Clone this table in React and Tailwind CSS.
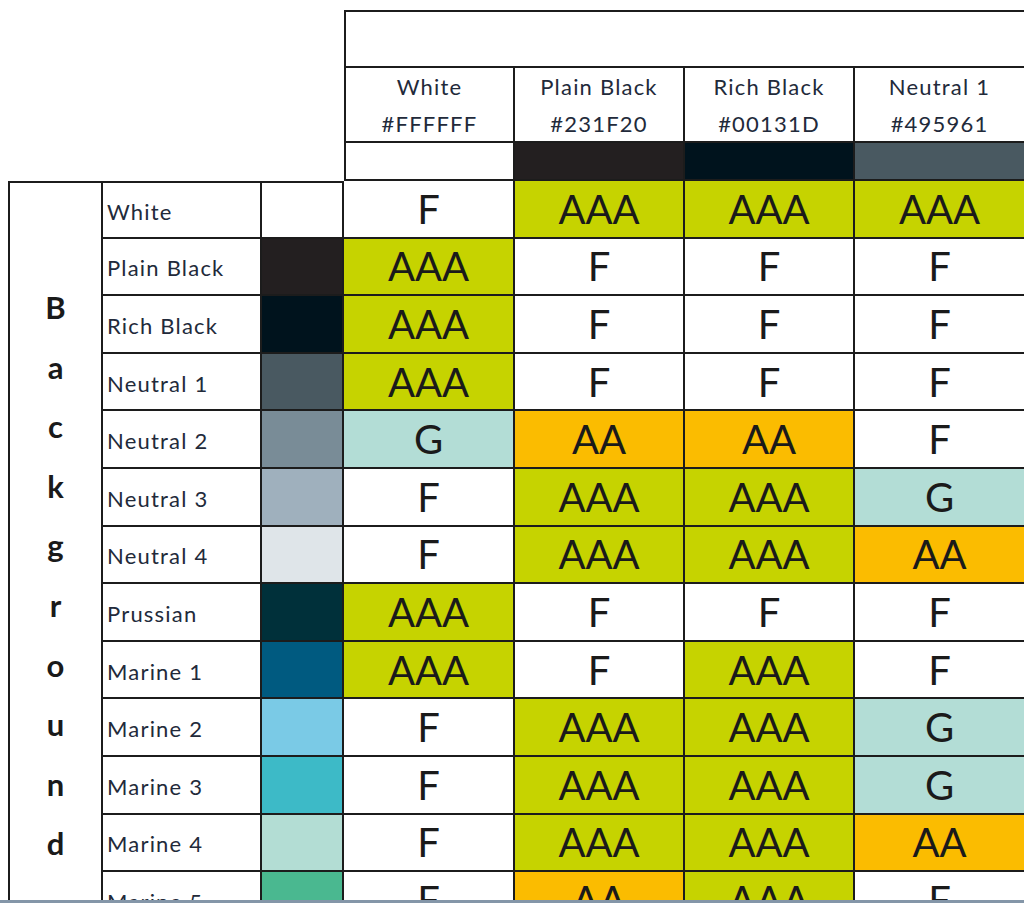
import React from 'react';

const COLS = [
    { name: 'White', hex: '#FFFFFF', swatch: 'bg-white' },
    { name: 'Plain Black', hex: '#231F20', swatch: 'bg-[#231f20]' },
    { name: 'Rich Black', hex: '#00131D', swatch: 'bg-[#00131d]' },
    { name: 'Neutral 1', hex: '#495961', swatch: 'bg-[#495961]' },
];

const ROWS = [
    { name: 'White', swatch: 'bg-white', vals: ['F', 'AAA', 'AAA', 'AAA'] },
    { name: 'Plain Black', swatch: 'bg-[#231f20]', vals: ['AAA', 'F', 'F', 'F'] },
    { name: 'Rich Black', swatch: 'bg-[#00131d]', vals: ['AAA', 'F', 'F', 'F'] },
    { name: 'Neutral 1', swatch: 'bg-[#495961]', vals: ['AAA', 'F', 'F', 'F'] },
    { name: 'Neutral 2', swatch: 'bg-[#798c97]', vals: ['G', 'AA', 'AA', 'F'] },
    { name: 'Neutral 3', swatch: 'bg-[#9fb0bd]', vals: ['F', 'AAA', 'AAA', 'G'] },
    { name: 'Neutral 4', swatch: 'bg-[#dfe5e9]', vals: ['F', 'AAA', 'AAA', 'AA'] },
    { name: 'Prussian', swatch: 'bg-[#00303a]', vals: ['AAA', 'F', 'F', 'F'] },
    { name: 'Marine 1', swatch: 'bg-[#005a80]', vals: ['AAA', 'F', 'AAA', 'F'] },
    { name: 'Marine 2', swatch: 'bg-[#7acae6]', vals: ['F', 'AAA', 'AAA', 'G'] },
    { name: 'Marine 3', swatch: 'bg-[#3dbac7]', vals: ['F', 'AAA', 'AAA', 'G'] },
    { name: 'Marine 4', swatch: 'bg-[#b3ddd4]', vals: ['F', 'AAA', 'AAA', 'AA'] },
    { name: 'Marine 5', swatch: 'bg-[#4ab890]', vals: ['F', 'AA', 'AAA', 'F'] },
];

const rating = {
    AAA: 'bg-[#c6d300]',
    AA: 'bg-[#fbbc00]',
    G: 'bg-[#b3ddd6]',
    F: 'bg-white',
};

const line = 'border-[#1c1c1c]';

const App = () => {
    return (
        <div className="relative w-[1024px] h-[903px] overflow-hidden bg-white pt-[10px] pl-[8px] font-['Lato','Open_Sans',sans-serif] text-[#1a1a1a]">
            <div className="grid grid-cols-[95px_159px_82px_171px_170px_170px_171px] w-[1018px]">
                {/* empty corner */}
                <div className="col-span-3 row-span-3" />

                {/* title row */}
                <div className={`col-span-4 h-[58px] border-t-2 border-l-2 border-b-2 ${line}`} />

                {/* column names */}
                {COLS.map((c, i) => (
                    <div
                        key={c.name}
                        className={`h-[75px] flex flex-col items-center justify-center text-[22px] tracking-[1.2px] leading-[37px] text-[#222a3a] border-r-2 border-b-2 ${line} ${i === 0 ? 'border-l-2' : ''}`}
                    >
                        <span>{c.name}</span>
                        <span>{c.hex}</span>
                    </div>
                ))}

                {/* column swatches */}
                {COLS.map((c, i) => (
                    <div
                        key={c.name + '-sw'}
                        className={`h-[38px] border-r-2 border-b-2 ${line} ${c.swatch} ${i === 0 ? 'border-l-2' : ''}`}
                    />
                ))}

                {/* Background label */}
                <div className={`row-span-13 border-2 ${line} flex flex-col items-center pt-[95px] text-[31px] font-bold leading-[59.6px]`}>
                    {'Background'.split('').map((ch, i) => (
                        <span key={i}>{ch}</span>
                    ))}
                </div>

                {ROWS.map((r, ri) => (
                    <React.Fragment key={r.name}>
                        <div className={`h-[57.6px] flex items-center pl-[4px] pt-[3px] text-[22px] tracking-[1.2px] text-[#222a3a] whitespace-nowrap overflow-hidden border-r-2 border-b-2 ${line} ${ri === 0 ? 'border-t-2' : ''}`}>
                            {r.name}
                        </div>
                        <div className={`h-[57.6px] border-r-2 border-b-2 ${line} ${r.swatch} ${ri === 0 ? 'border-t-2' : ''}`} />
                        {r.vals.map((v, vi) => (
                            <div
                                key={vi}
                                className={`h-[57.6px] flex items-center justify-center text-[40px] border-r-2 border-b-2 ${line} ${rating[v]}`}
                            >
                                {v}
                            </div>
                        ))}
                    </React.Fragment>
                ))}
            </div>

            <div className="absolute left-0 right-0 bottom-0 h-[3px] bg-[#8496a8]" />
        </div>
    );
};

export default App;
